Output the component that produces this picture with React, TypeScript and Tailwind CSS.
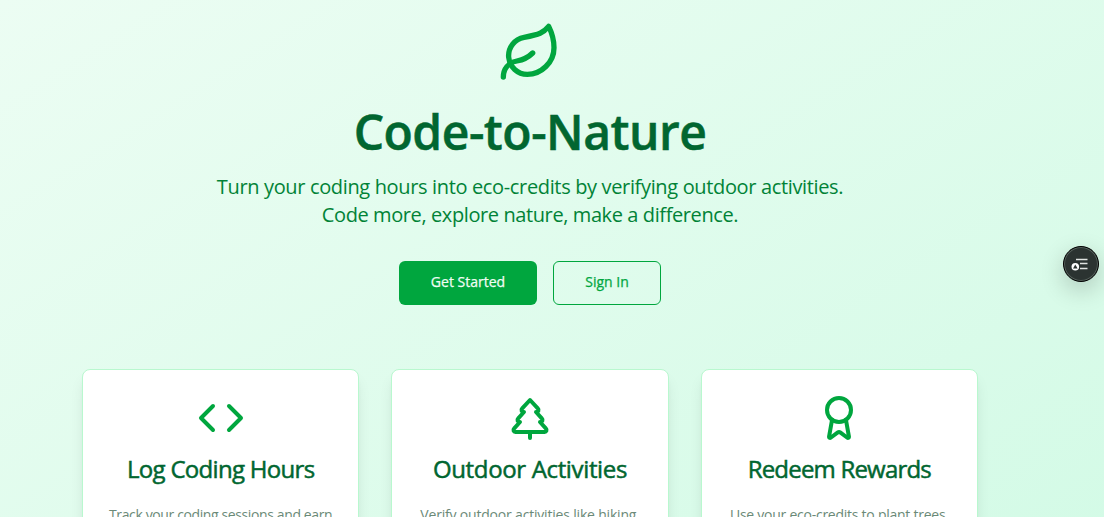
import { Award, Code, Leaf, TreePine } from "lucide-react";

const features = [
  {
    icon: Code,
    title: "Log Coding Hours",
    titleClass: "tracking-[-0.7px]",
    text: "Track your coding sessions and earn",
    textClass: "tracking-[-0.38px]",
  },
  {
    icon: TreePine,
    title: "Outdoor Activities",
    titleClass: "tracking-[-0.35px]",
    text: "Verify outdoor activities like hiking,",
    textClass: "tracking-[-0.19px]",
  },
  {
    icon: Award,
    title: "Redeem Rewards",
    titleClass: "tracking-[-0.8px]",
    text: "Use your eco-credits to plant trees,",
    textClass: "tracking-[-0.25px]",
  },
];

function AssistantButton() {
  return (
    <button
      aria-label="Open assistant"
      className="absolute top-[246px] right-[5px] flex size-9 items-center justify-center rounded-full border border-black bg-[#2b3331] shadow-[0_8px_24px_rgba(0,0,0,0.2)] ring-1 ring-[#55605b] ring-inset"
    >
      <svg viewBox="0 0 18 18" className="mr-0.5 size-[18px] shrink-0" fill="none">
        <path d="M5 4.5h11.5M9 8.5h7.5M9 13.5h7.5" stroke="#dfe3e1" strokeWidth="1.4" />
        <circle cx="4.3" cy="11.8" r="3.8" fill="#fff" />
        <path d="M4.3 9.6 6.6 13.4H2z" fill="#2b3331" />
      </svg>
    </button>
  );
}

export default function App() {
  return (
    <div className="relative h-[517px] overflow-hidden bg-gradient-to-br from-[#ecfdf3] to-emerald-100 bg-[length:100%_700px] bg-no-repeat font-['Open_Sans','Noto_Sans',sans-serif]">
      <main className="ml-[82px] flex w-[896px] flex-col pt-[21px]">
        <section className="flex flex-col items-center text-center">
          <Leaf className="size-16 text-green-600" />
          <h1 className="mt-[23px] text-5xl leading-[48px] font-semibold tracking-[-0.5px] whitespace-nowrap text-green-800 [-webkit-text-stroke:0.5px_currentColor]">
            Code-to-Nature
          </h1>
          <p className="mt-[17px] text-xl leading-7 whitespace-nowrap text-green-700">
            <span className="tracking-[-0.35px]">
              Turn your coding hours into eco-credits by verifying outdoor activities.
            </span>
            <br />
            <span className="tracking-[-0.4px]">Code more, explore nature, make a difference.</span>
          </p>
          <div className="mt-8 flex gap-4">
            <button className="h-11 w-[138px] rounded-md bg-green-600 pb-0.5 text-sm font-medium text-green-50 [-webkit-text-stroke:0.25px_currentColor]">
              Get Started
            </button>
            <button className="h-11 w-[108px] rounded-md border border-green-600 pb-0.5 text-sm font-medium text-green-600 [-webkit-text-stroke:0.25px_currentColor]">
              Sign In
            </button>
          </div>
        </section>
        <section className="mt-16 grid grid-cols-3 gap-8">
          {features.map(({ icon: Icon, title, titleClass, text, textClass }) => (
            <article
              key={title}
              className="flex h-60 flex-col items-center rounded-lg border border-green-200 bg-white pt-6 shadow-lg"
            >
              <Icon className="size-12 text-green-600" />
              <h2 className="mt-[11px] text-2xl font-medium whitespace-nowrap text-green-800 [-webkit-text-stroke:0.5px_currentColor]">
                <span className={titleClass}>{title}</span>
              </h2>
              <p className="mt-5 text-sm whitespace-nowrap text-[#6b8a78]">
                <span className={textClass}>{text}</span>
              </p>
            </article>
          ))}
        </section>
      </main>
      <AssistantButton />
    </div>
  );
}
